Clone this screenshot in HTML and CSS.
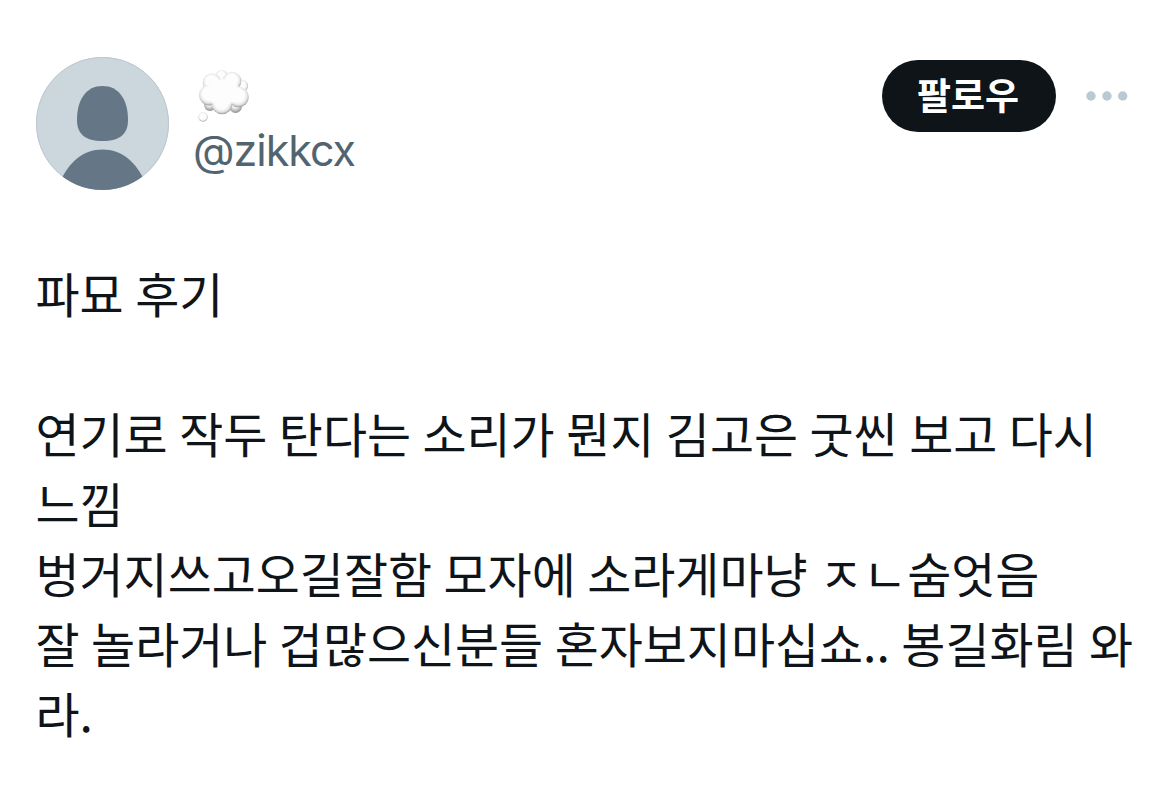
FILE: index.html
```
<!DOCTYPE html>
<html lang="ko">
<head>
  <meta charset="UTF-8" />
  <meta name="viewport" content="width=device-width, initial-scale=1" />
  <title>@zikkcx</title>
  <link rel="stylesheet" href="styles.css">
</head>
<body>

<article class="post">
  <header class="post-header">
    <svg class="avatar" viewBox="0 0 134 134" aria-hidden="true">
      <defs>
        <clipPath id="circle"><circle cx="66.500" cy="67.500" r="66.500" /></clipPath>
      </defs>
      <circle cx="66.500" cy="67.500" r="66.500" fill="#ccd6dd" />
      <circle cx="66.500" cy="67.500" r="66" fill="none" stroke="#bdc8cf" />
      <g clip-path="url(#circle)" fill="#657786">
        <path d="M66.500 30c16 0 25.500 13 25.500 34 0 14-8 21-25.500 21s-25.500-7-25.500-21c0-21 9.500-34 25.500-34z" />
        <path d="M24 126c9-20 23-32.500 42.500-32.500s33.500 12.500 42.500 32.500v12H24z" />
      </g>
    </svg>
    <div class="user">
      <svg class="bubble" viewBox="0 0 56 56" aria-hidden="true">
        <defs>
          <radialGradient id="puff" cx="48%" cy="44%" r="56%">
            <stop offset="0.550" stop-color="#fdfdfd" />
            <stop offset="0.800" stop-color="#e4e4e4" />
            <stop offset="1" stop-color="#9c9c9c" />
          </radialGradient>
          <radialGradient id="shade" cx="46%" cy="38%" r="60%">
            <stop offset="0.400" stop-color="#ececec" />
            <stop offset="1" stop-color="#959595" />
          </radialGradient>
          <radialGradient id="core">
            <stop offset="0.800" stop-color="#fdfdfd" />
            <stop offset="1" stop-color="#fdfdfd" stop-opacity="0" />
          </radialGradient>
        </defs>
        <g fill="url(#shade)">
          <circle cx="16" cy="37" r="6" />
          <circle cx="41.500" cy="38.500" r="6.500" />
        </g>
        <g fill="url(#puff)">
          <circle cx="27.500" cy="8" r="6" />
          <circle cx="47.500" cy="18" r="6.500" />
          <circle cx="18" cy="14.500" r="9.300" />
          <circle cx="38" cy="13" r="9.300" />
          <circle cx="15.500" cy="27" r="10.500" />
          <circle cx="44.500" cy="29" r="10.300" />
          <circle cx="28" cy="36" r="10.300" />
        </g>
        <ellipse cx="28.500" cy="24" rx="19" ry="14.500" fill="url(#core)" />
        <circle cx="9" cy="49" r="4.700" fill="url(#puff)" />
      </svg>
      <span class="handle">@zikkcx</span>
    </div>
    <button class="btn-follow">팔로우</button>
    <svg class="more" viewBox="0 0 42 10" aria-hidden="true">
      <circle cx="5" cy="5" r="4.700" /><circle cx="21" cy="5" r="4.700" /><circle cx="36.700" cy="5" r="4.700" />
    </svg>
  </header>

  <div class="post-text">
    <p>파묘 후기</p>
    <p class="blank"></p>
    <p>연기로 작두 탄다는 소리가 뭔지 김고은 굿씬 보고 다시<br>느낌</p>
    <p>벙거지쓰고오길잘함 모자에 소라게마냥 ㅈㄴ숨엇음</p>
    <p>잘 놀라거나 겁많으신분들 혼자보지마십쇼.. 봉길화림 와<br>라.</p>
  </div>
</article>

</body>
</html>
```

FILE: styles.css
```
*, *::before, *::after { margin: 0; padding: 0; box-sizing: border-box; }
body {
  font-family: 'Noto Sans CJK KR', sans-serif;
  background: #fff;
  color: #0f1419;
  overflow: hidden;
}
.post {
  padding: 56px 36px 0;
}
.post-header {
  display: flex;
  align-items: flex-start;
  height: 134px;
}
.avatar {
  width: 134px;
  height: 134px;
}
.user {
  display: flex;
  flex-direction: column;
  margin-left: 24px;
  padding-top: 12px;
}
.bubble {
  width: 56px;
  height: 56px;
}
.handle {
  margin: -1px 0 0 -1px;
  font-family: Inter, sans-serif;
  font-size: 43px;
  letter-spacing: -1px;
  line-height: 54px;
  color: #536471;
}
.btn-follow {
  margin: 4px 0 0 auto;
  width: 174px;
  height: 72px;
  border: none;
  border-radius: 36px;
  background: #0f1419;
  color: #fff;
  font-family: inherit;
  font-size: 37px;
  font-weight: bold;
  line-height: 68px;
  padding-bottom: 4px;
  padding-right: 2px;
}
.more {
  width: 42px;
  height: 10px;
  margin: 35px 6px 0 30px;
  fill: #b9cad3;
}
.post-text {
  margin: 67px 0 0 -0.500px;
  font-size: 47.900px;
  line-height: 70px;
  word-spacing: -1.900px;
  white-space: nowrap;
}
.blank {
  height: 70px;
}
```
